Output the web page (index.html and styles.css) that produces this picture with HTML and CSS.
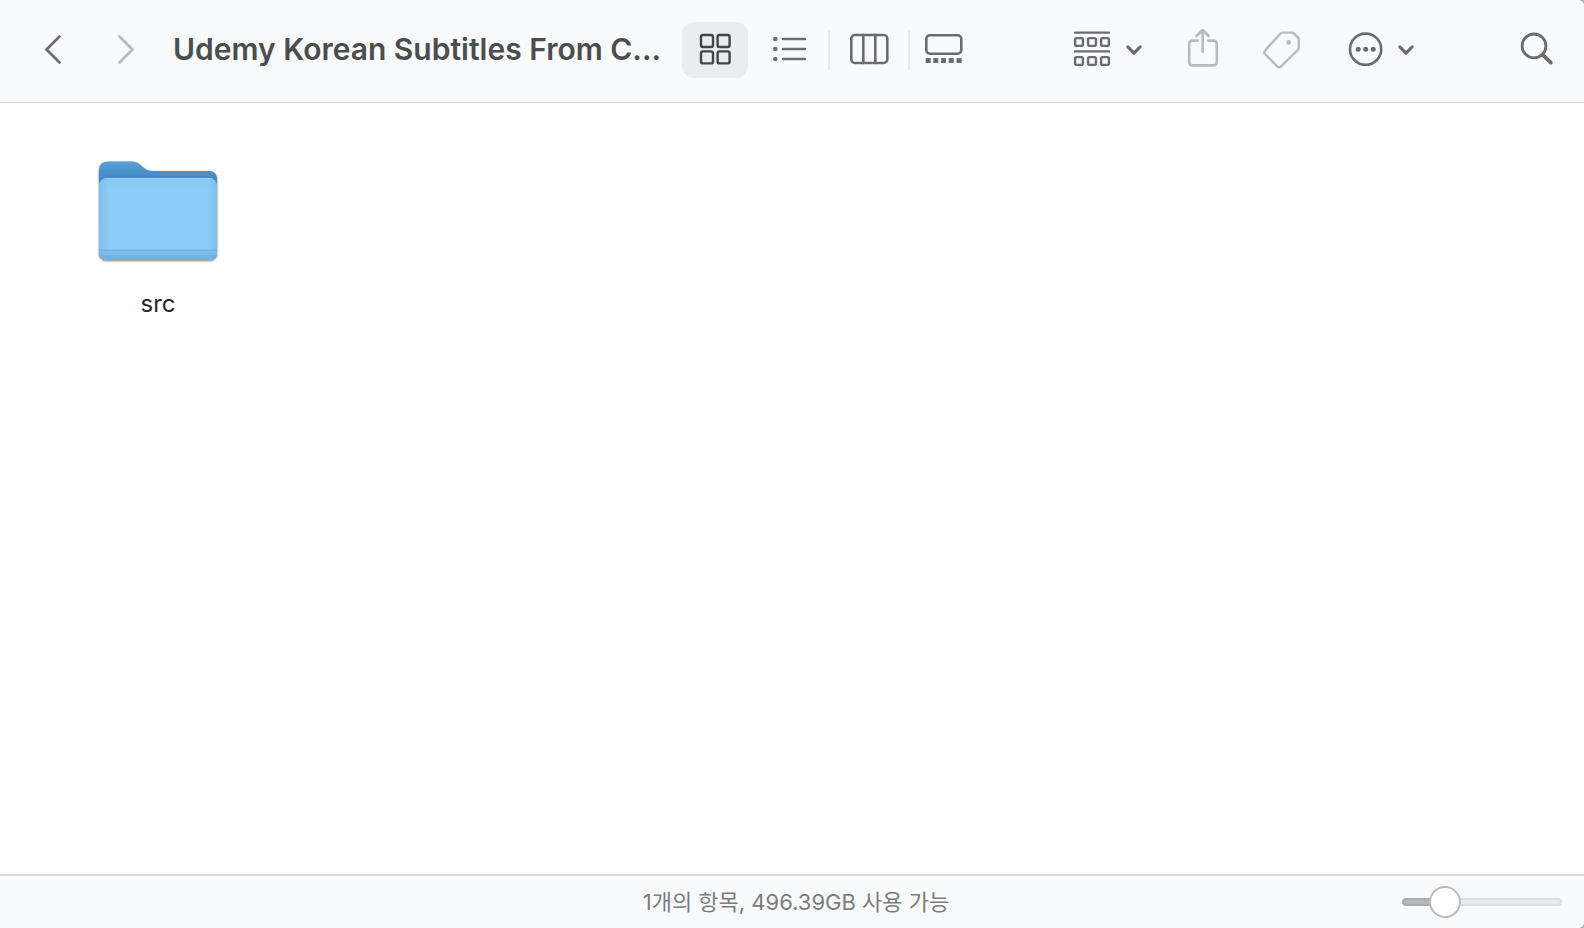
FILE: index.html
```html
<!DOCTYPE html>
<html lang="ko">
  <head>
    <meta charset="UTF-8" />
    <meta name="viewport" content="width=device-width, initial-scale=1.0" />
    <title>Udemy Korean Subtitles</title>
    <link rel="stylesheet" href="styles.css">
  </head>
  <body>
    <div class="window">
      <header class="toolbar">
        <nav class="history">
          <button type="button" aria-label="Back">
            <svg width="40" height="40" viewBox="0 0 40 40" stroke-width="2.8"><path d="M27.500 7.500 14.500 20.500l13 13" /></svg>
          </button>
          <button type="button" class="off" aria-label="Forward">
            <svg width="40" height="40" viewBox="0 0 40 40" stroke-width="2.8"><path d="M14.500 7.500l13 13-13 13" /></svg>
          </button>
        </nav>

        <h1 class="title">Udemy Korean Subtitles From C...</h1>

        <div class="views">
          <button type="button" class="view active" aria-label="Icons" aria-pressed="true">
            <svg width="40" height="40" viewBox="0 0 40 40" stroke-width="2.4">
              <rect x="6" y="6" width="12" height="12" rx="2" />
              <rect x="22.600" y="6" width="12" height="12" rx="2" />
              <rect x="6" y="22.400" width="12" height="12" rx="2" />
              <rect x="22.600" y="22.400" width="12" height="12" rx="2" />
            </svg>
          </button>
          <button type="button" class="view" aria-label="List">
            <svg width="40" height="40" viewBox="0 0 40 40" stroke-width="2.6">
              <path d="M14 10h22M14 20h22M14 30h22" />
              <g class="solid"><circle cx="6.3" cy="10" r="2.3" /><circle cx="6.3" cy="20" r="2.3" /><circle cx="6.3" cy="30" r="2.3" /></g>
            </svg>
          </button>
          <span class="divider"></span>
          <button type="button" class="view" aria-label="Columns">
            <svg width="40" height="40" viewBox="0 0 40 40" stroke-width="2.6">
              <rect x="2.3" y="6" width="36" height="28" rx="3.6" />
              <path d="M14.3 6v28M26.3 6v28" />
            </svg>
          </button>
          <span class="divider"></span>
          <button type="button" class="view last" aria-label="Gallery">
            <svg width="40" height="40" viewBox="0 0 40 40" stroke-width="2.6">
              <rect x="2.3" y="6.3" width="35" height="18.4" rx="3.6" />
              <g class="solid">
                <rect x="1.7" y="29" width="5" height="5" rx=".6" />
                <rect x="9.3" y="29" width="5" height="5" rx=".6" />
                <rect x="17" y="29" width="5" height="5" rx=".6" />
                <rect x="24.7" y="29" width="5" height="5" rx=".6" />
                <rect x="32.6" y="29" width="5" height="5" rx=".6" />
              </g>
            </svg>
          </button>
        </div>

        <div class="actions">
          <button type="button" class="menu" aria-label="Group">
            <svg width="42" height="40" viewBox="0 0 42 40" stroke-width="2.4">
              <path d="M3 3.6h34M3 22.4h34" />
              <rect x="3.1" y="9.1" width="7.8" height="7.8" rx="1.6" />
              <rect x="16.1" y="9.1" width="7.8" height="7.8" rx="1.6" />
              <rect x="29.1" y="9.1" width="7.8" height="7.8" rx="1.6" />
              <rect x="3.1" y="28.1" width="7.8" height="7.8" rx="1.6" />
              <rect x="16.1" y="28.1" width="7.8" height="7.8" rx="1.6" />
              <rect x="29.1" y="28.1" width="7.8" height="7.8" rx="1.6" />
            </svg>
            <svg width="16" height="16" viewBox="0 0 16 16" stroke-width="3.2"><path d="M2 6l6 6.2L14 6" /></svg>
          </button>
          <button type="button" class="off" aria-label="Share">
            <svg width="40" height="40" viewBox="0 0 40 40" stroke-width="2.6">
              <path d="M15.600 11.600H10.400a3.200 3.200 0 0 0-3.200 3.200v18.400a3.200 3.200 0 0 0 3.200 3.200h21.200a3.200 3.200 0 0 0 3.200-3.200V14.800a3.200 3.200 0 0 0-3.200-3.200h-5.400" />
              <path d="M20.600 23V1.400M14.600 7l6-6 6 6" />
            </svg>
          </button>
          <button type="button" class="off" aria-label="Tags">
            <svg width="40" height="40" viewBox="0 0 40 40" stroke-width="2.4">
              <path d="M20.600 3.600h9.200a3 3 0 0 1 2 .8l4.200 4.200a3 3 0 0 1 .8 2v8.200a3 3 0 0 1-.9 2.200L18.800 37.600a2.400 2.400 0 0 1-3.400 0L3 25a2.400 2.400 0 0 1 0-3.400L18.500 4.500a3 3 0 0 1 2.100-.9z" />
              <circle class="solid" cx="26.600" cy="13.400" r="2.400" />
            </svg>
          </button>
          <button type="button" class="menu" aria-label="More">
            <svg width="44" height="40" viewBox="0 0 44 40" stroke-width="2.6">
              <circle cx="23.600" cy="20.200" r="15.600" />
              <g class="solid"><circle cx="16.200" cy="20.200" r="2.500" /><circle cx="23.700" cy="20.200" r="2.500" /><circle cx="31.200" cy="20.200" r="2.500" /></g>
            </svg>
            <svg width="16" height="16" viewBox="0 0 16 16" stroke-width="3.2"><path d="M2 6l6 6.200L14 6" /></svg>
          </button>
          <button type="button" class="search" aria-label="Search">
            <svg width="40" height="40" viewBox="0 0 40 40" stroke-width="2.800">
              <circle cx="17" cy="16.900" r="11.900" />
              <path stroke-width="3.800" d="M26.400 26.300l7.400 7.400" />
            </svg>
          </button>
        </div>
      </header>

      <main class="files">
        <a class="file" href="#src">
          <svg class="folder" width="128" height="112" viewBox="0 0 128 112">
            <defs>
              <linearGradient id="back" x1="0" y1="0" x2="0" y2="1">
                <stop offset="0" stop-color="#5a9fd4" />
                <stop offset=".2" stop-color="#3d86c6" />
                <stop offset="1" stop-color="#3d86c6" />
              </linearGradient>
              <linearGradient id="front" x1="0" y1="0" x2="0" y2="1">
                <stop offset="0" stop-color="#87c8f3" />
                <stop offset=".12" stop-color="#8ccdf8" />
                <stop offset="1" stop-color="#8bccf7" />
              </linearGradient>
              <linearGradient id="sides">
                <stop offset="0" stop-color="#6fb4e3" stop-opacity=".5" />
                <stop offset=".08" stop-color="#6fb4e3" stop-opacity="0" />
                <stop offset=".92" stop-color="#6fb4e3" stop-opacity="0" />
                <stop offset="1" stop-color="#6fb4e3" stop-opacity=".5" />
              </linearGradient>
              <clipPath id="frontClip"><rect x="5" y="21" width="118" height="82" rx="8" /></clipPath>
            </defs>
            <path fill="url(#back)" d="M5 95V13.500q0-9 9-9h23.500c4.500 0 6.500 1.200 10 4.200 4.500 4 7 5.300 13.500 5.300H115q8 0 8 8.500V95q0 8-8 8H13q-8 0-8-8z" />
            <g clip-path="url(#frontClip)">
              <path fill="url(#front)" d="M5 21h118v82H5z" />
              <path fill="url(#sides)" d="M5 21h118v82H5z" />
              <path fill="#7bbdeb" d="M5 93h118v10H5z" />
              <path fill="#6cafdf" d="M5 92.500h118v1.500H5zM5 98h118v5H5z" opacity=".7" />
              <path fill="#b1defb" d="M5 21h118v1H5z" opacity=".6" />
            </g>
          </svg>
          <span class="name">src</span>
        </a>
      </main>

      <footer class="status">
        <p class="summary">1개의 항목, 496.39GB 사용 가능</p>
        <input class="zoom" type="range" min="0" max="100" value="20" aria-label="Icon size" />
      </footer>
    </div>
  </body>
</html>
```

FILE: styles.css
```css
* {
  box-sizing: border-box;
}
body {
  margin: 0;
  background: #b4b4b4;
  font-family: Inter, "Noto Sans CJK KR", sans-serif;
}
.window {
  min-height: 100vh;
  display: flex;
  flex-direction: column;
  background: #fff;
  border-radius: 0 6px 6px 0;
  overflow: hidden;
}
button {
  border: 0;
  padding: 0 0 2px;
  background: none;
  color: #6c6c6e;
  display: flex;
  align-items: center;
  justify-content: center;
}
svg {
  display: block;
  flex: none;
  fill: none;
  stroke: currentColor;
  stroke-linecap: round;
  stroke-linejoin: round;
}
.solid {
  fill: currentColor;
  stroke: none;
}
.off {
  color: #b9babc;
}

/* toolbar */
.toolbar {
  display: flex;
  align-items: center;
  padding: 22px 27px 24px 32px;
  background: #f9fafc;
  border-bottom: 1px solid #d6d6d8;
}
.history {
  display: flex;
  gap: 33px;
}
.title {
  flex: 0 1 537px;
  min-width: 0;
  margin: 0;
  padding: 0 0 2px 28px;
  font-size: 30px;
  line-height: 40px;
  font-weight: 600;
  color: #4c4d4d;
  white-space: nowrap;
  overflow: hidden;
}
.views {
  display: flex;
  align-items: center;
}
.view {
  width: 78px;
  height: 56px;
}
.view.active {
  width: 66px;
  margin-right: 2px;
  border-radius: 12px;
  background: #ebecee;
  color: #444546;
}
.view.last {
  width: 68px;
}
.divider {
  width: 2px;
  height: 40px;
  background: #e9eaec;
}
.actions {
  display: flex;
  gap: 40px;
  margin-left: auto;
}
.menu {
  gap: 12px;
}
.search {
  margin-left: 63px;
}

/* files */
.files {
  flex: 1;
  padding: 54px 94px;
}
.file {
  display: inline-flex;
  flex-direction: column;
  align-items: center;
  gap: 21px;
  color: #262626;
  text-decoration: none;
}
.folder {
  stroke: none;
  filter: drop-shadow(0 1px 1px rgba(0, 0, 0, 0.5));
}
.name {
  font-size: 24px;
  line-height: 28px;
}

/* status bar */
.status {
  display: grid;
  grid-template-columns: 1fr auto 1fr;
  align-items: center;
  height: 54px;
  padding: 0 22px 0 30px;
  background: #f9fafc;
  border-top: 2px solid #dadadc;
}
.summary {
  grid-column: 2;
  margin: 0;
  font-size: 22px;
  line-height: 32px;
  color: #7b7c7d;
}
.zoom {
  justify-self: end;
  appearance: none;
  width: 160px;
  height: 32px;
  margin: 0;
  background: none;
}
.zoom::-webkit-slider-runnable-track {
  height: 8px;
  border: 2px solid rgba(0, 0, 0, 0.05);
  border-radius: 4px;
  background: linear-gradient(to right, #b5b6b8 25%, #e9eaec 25%) border-box;
}
.zoom::-webkit-slider-thumb {
  appearance: none;
  width: 32px;
  height: 32px;
  margin-top: -14px;
  border: 2px solid #b9babc;
  border-radius: 50%;
  background: #fff;
}
```
